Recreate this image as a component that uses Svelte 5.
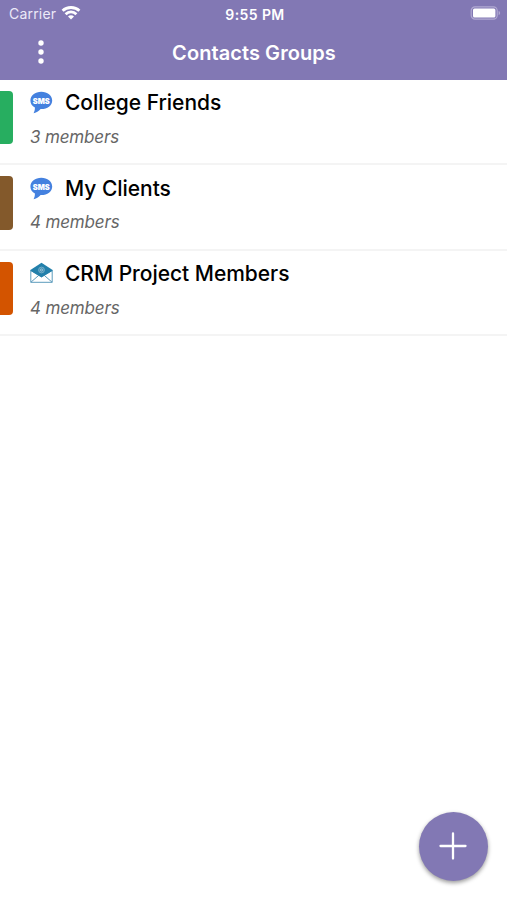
<script>
	let groups = $state([
		{ name: 'College Friends', members: 3, color: '#27ae60', type: 'sms' },
		{ name: 'My Clients', members: 4, color: '#83592b', type: 'sms' },
		{ name: 'CRM Project Members', members: 4, color: '#d35400', type: 'email' }
	]);
</script>

<div class="screen">
	<header>
		<div class="status">
			<div class="carrier">
				<span>Carrier</span>
				<svg width="20" height="14" viewBox="0 0 20 14" fill="none" stroke="#fff" stroke-width="2.8">
					<path d="M1.6 4.8C6 .4 14 .4 18.4 4.8" />
					<path d="M4.6 8.2c3-3 7.8-3 10.8 0" />
					<path d="M10 13.4 7 10.4c1.7-1.6 4.3-1.6 6 0z" fill="#fff" stroke="none" />
				</svg>
			</div>
			<time>9:55 PM</time>
			<svg class="battery" width="31" height="14" viewBox="0 0 31 14">
				<rect x="1.2" y=".9" width="26" height="12.2" rx="3.8" fill="none" stroke="#b1a9d2" stroke-width="1.2" />
				<rect x="3" y="2.5" width="22.4" height="9" rx="1.5" fill="#fff" />
				<path d="M28.6 4.9c2 .7 2 3.5 0 4.2z" fill="#b1a9d2" />
			</svg>
		</div>
		<div class="navbar">
			<button class="menu" aria-label="Menu">
				<svg width="6" height="24" viewBox="0 0 6 24" fill="#fff">
					<circle cx="3" cy="3" r="2.7" />
					<circle cx="3" cy="12" r="2.7" />
					<circle cx="3" cy="21" r="2.7" />
				</svg>
			</button>
			<h1>Contacts Groups</h1>
		</div>
	</header>

	<ul>
		{#each groups as group}
			<li>
				<div class="swatch" style:background={group.color}></div>
				<div class="info">
					<div class="title">
						{#if group.type === 'sms'}
							<svg width="23" height="23" viewBox="0 0 23 23">
								<path
									d="M11.3.7C5.2.7.4 4.5.4 9.4c0 3.1 1.8 5.6 4.5 7.1.1 2-.4 3.9-1.3 5.7 3.3-.7 5.6-2.2 7-4.1h.7c6.1 0 10.9-3.8 10.9-8.7S17.4.7 11.3.7z"
									fill="#4481df"
								/>
								<text x="11.3" y="12.7" text-anchor="middle" textLength="17" lengthAdjust="spacingAndGlyphs">SMS</text>
							</svg>
						{:else}
							<svg width="23" height="23" viewBox="0 0 23 23">
								<path d="M.8 8.5v11.8h21.4V8.5L11.5 15z" fill="#fff" stroke="#5c9bbc" />
								<path d="m.8 20.3 8-7m13.4 7-8-7" fill="none" stroke="#5c9bbc" />
								<path d="M.4 8 11.5.7 22.6 8v.8L11.5 15.3.4 8.8z" fill="#2380ab" />
								<circle cx="11.5" cy="8" r="2.9" fill="#428fb4" stroke="#78b0ca" stroke-width=".9" />
								<circle cx="11.5" cy="8" r="1.1" fill="none" stroke="#a9cddd" stroke-width=".8" />
							</svg>
						{/if}
						<h2>{group.name}</h2>
					</div>
					<p>{group.members} members</p>
				</div>
			</li>
		{/each}
	</ul>

	<button class="add" aria-label="Add group">
		<svg width="28" height="28" viewBox="0 0 28 28" stroke="#fff" stroke-width="2.3" stroke-linecap="round">
			<path d="M14 1.5v25M1.5 14h25" />
		</svg>
	</button>
</div>

<style>
	.screen {
		position: relative;
		height: 900px;
		overflow: hidden;
		background: #fff;
		font-family: Inter, 'Liberation Sans', sans-serif;
	}
	header {
		height: 80px;
		background: #8278b4;
		color: #fff;
	}
	.status {
		display: grid;
		grid-template-columns: 1fr auto 1fr;
		align-items: center;
		height: 26px;
		padding: 0 6px 0 9px;
	}
	.carrier {
		display: flex;
		align-items: center;
		gap: 5px;
		font-size: 14px;
		letter-spacing: 0.2px;
		color: #ece9f8;
	}
	time {
		padding-top: 2px;
		font-size: 14px;
		font-weight: 600;
		letter-spacing: 0.4px;
	}
	.battery {
		justify-self: end;
	}
	.navbar {
		display: grid;
		grid-template-columns: 81px 1fr 80px;
		height: 52px;
		align-items: center;
	}
	button {
		display: flex;
		align-items: center;
		justify-content: center;
		padding: 0;
		border: 0;
		background: none;
	}
	h1 {
		margin: 0;
		padding-top: 1px;
		text-align: center;
		font-size: 20px;
		font-weight: 600;
		letter-spacing: 0.07px;
	}
	ul {
		margin: 0;
		padding: 0;
		list-style: none;
	}
	li {
		display: flex;
		box-sizing: border-box;
		height: 85.5px;
		padding-top: 10.5px;
		background: linear-gradient(#f4f4f4, #f4f4f4) 0 83px / 100% 2px no-repeat;
	}
	.swatch {
		width: 13.4px;
		height: 53.5px;
		border-radius: 0 4px 4px 0;
	}
	.info {
		margin-left: 16.6px;
	}
	.title {
		display: flex;
		align-items: center;
		gap: 12px;
		height: 24px;
	}
	.title text {
		fill: #fff;
		font-size: 8px;
		font-weight: 900;
	}
	h2 {
		margin: 0;
		font-size: 21px;
		font-weight: 500;
		letter-spacing: -0.03px;
		color: #000;
	}
	p {
		margin: 12.4px 0 0;
		font-size: 17px;
		line-height: 20px;
		font-style: italic;
		letter-spacing: -0.15px;
		color: #666;
	}
	.add {
		position: absolute;
		right: 19.5px;
		bottom: 19.5px;
		width: 69px;
		height: 69px;
		border-radius: 50%;
		background: #8278b4;
		box-shadow: 0 2px 4px rgba(0, 0, 0, 0.4);
	}
</style>
